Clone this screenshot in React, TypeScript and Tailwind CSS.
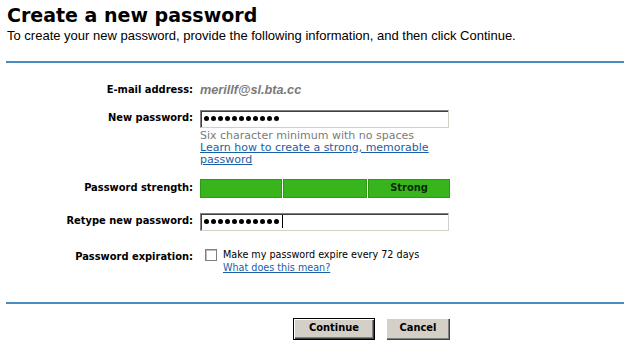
import React from "react";

const tahoma = { fontFamily: '"DejaVu Sans Condensed", "DejaVu Sans", sans-serif' };

function Dots({ caret }: { caret?: boolean }) {
  return (
    <div className="flex items-center gap-[2px] pl-[3px]">
      {Array.from({ length: 11 }).map((_, i) => (
        <span key={i} className="block w-[5px] h-[5px] rounded-full bg-black" />
      ))}
      {caret && <span className="block w-px h-[13px] bg-black ml-[1px]" />}
    </div>
  );
}

function Field({ caret }: { caret?: boolean }) {
  return (
    <div className="w-[249px] h-[18px] bg-white border-t border-l border-t-[#7f7f7f] border-l-[#7f7f7f] border-r border-b border-r-[#d4d0c8] border-b-[#d4d0c8] flex items-center shadow-[inset_1px_1px_0_#404040]">
      <Dots caret={caret} />
    </div>
  );
}

function Label({ children, top }: { children: React.ReactNode; top?: boolean }) {
  return (
    <div
      className={
        top
          ? "self-start mt-[2px] leading-[13px] text-right font-bold text-[11px] text-black pr-[7px]"
          : "text-right font-bold text-[11px] text-black pr-[7px]"
      }
      style={tahoma}
    >
      {children}
    </div>
  );
}

export default function App() {
  return (
    <div className="w-[635px] h-[349px] bg-white overflow-hidden">
      <div className="pl-[7px] pt-[3px]">
        <h1 className="text-[19px] leading-[25px] font-bold text-black" style={{ fontFamily: '"DejaVu Sans", Verdana, sans-serif' }}>
          Create a new password
        </h1>
        <p className="text-[13px] leading-[15px] text-black" style={{ fontFamily: '"Liberation Sans", Arial, sans-serif' }}>
          To create your new password, provide the following information, and then click Continue.
        </p>
      </div>
      <div className="ml-[6px] w-[618px] h-[2px] bg-[#4b8bbe] mt-[18px]" />

      <div className="grid grid-cols-[200px_260px] items-center mt-[19px]">
        <Label>E-mail address:</Label>
        <div
          className="italic font-bold text-[12.7px] text-[#7a7a7a] leading-[16px]"
          style={{ fontFamily: '"Liberation Sans", Arial, sans-serif' }}
        >
          merillf@sl.bta.cc
        </div>

        <div className="h-[11px] col-span-2" />

        <Label>New password:</Label>
        <Field />

        <div />
        <div className="pt-[2px] text-[11px] leading-[12px]" style={{ fontFamily: '"DejaVu Sans", Verdana, sans-serif' }}>
          <div className="text-[#7a7a7a]">Six character minimum with no spaces</div>
          <a href="#" className="text-[#1a5ea8] underline block">
            Learn how to create a strong, memorable password
          </a>
        </div>

        <div className="h-[13px] col-span-2" />

        <Label>Password strength:</Label>
        <div className="w-[250px] h-[19px] flex gap-px">
          <div className="w-[82px] h-full bg-[#38b51c] border border-[#2e9a14]" />
          <div className="w-[84px] h-full bg-[#38b51c] border border-[#2e9a14]" />
          <div
            className="flex-1 h-full bg-[#38b51c] border border-[#2e9a14] flex items-center justify-center font-bold text-[11px] text-[#0b2a05]"
            style={tahoma}
          >
            Strong
          </div>
        </div>

        <div className="h-[15px] col-span-2" />

        <Label>Retype new password:</Label>
        <Field caret />

        <div className="h-[17px] col-span-2" />

        <Label top>Password expiration:</Label>
        <div className="flex items-start gap-[6px] pl-[5px]" style={tahoma}>
          <div className="w-[12px] h-[12px] mt-[1px] bg-white border border-[#7f7f7f] shadow-[inset_1px_1px_0_#c0c0c0]" />
          <div className="text-[10.7px] leading-[13px]">
            <div className="text-black">Make my password expire every 72 days</div>
            <a href="#" className="text-[#1a5ea8] underline">What does this mean?</a>
          </div>
        </div>
      </div>

      <div className="ml-[6px] w-[618px] h-[2px] bg-[#4b8bbe] mt-[28px]" />

      <div className="flex gap-[11px] ml-[293px] mt-[14px]" style={tahoma}>
        <button className="w-[82px] h-[22px] bg-[#d4d0c8] border border-black font-bold text-[11px] text-black shadow-[inset_1px_1px_0_#ffffff,inset_-1px_-1px_0_#404040,inset_-2px_-2px_0_#808080]">
          Continue
        </button>
        <button className="w-[64px] h-[22px] bg-[#d4d0c8] font-bold text-[11px] text-black shadow-[inset_1px_1px_0_#ffffff,inset_-1px_-1px_0_#404040,inset_-2px_-2px_0_#808080]">
          Cancel
        </button>
      </div>
    </div>
  );
}
